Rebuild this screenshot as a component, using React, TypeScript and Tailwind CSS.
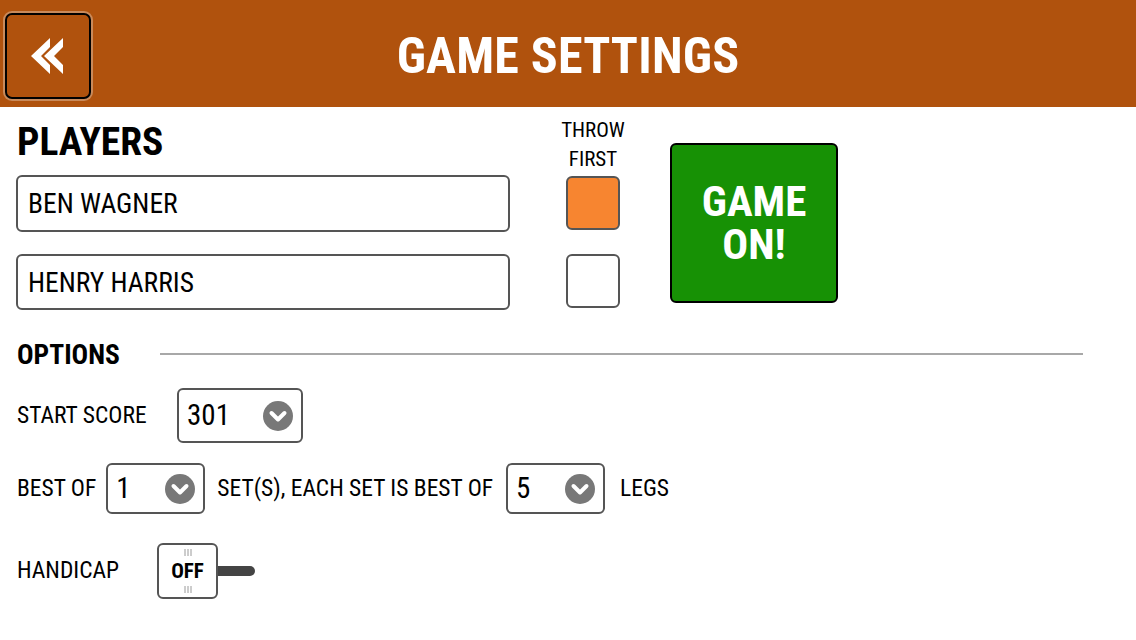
import React from "react";

function Chevron() {
  return (
    <svg width="30" height="30" viewBox="0 0 30 30" className="shrink-0">
      <circle cx="15" cy="15" r="15" fill="#787878" />
      <path d="M8.5 12 L15 18.5 L21.5 12" fill="none" stroke="#ffffff" strokeWidth="4" strokeLinecap="round" strokeLinejoin="round" />
    </svg>
  );
}

function Select({ value, w, h }: { value: string; w: string; h: string }) {
  return (
    <div className={`${w} ${h} border-2 border-[#555555] rounded-[6px] flex items-center justify-between pl-[8px] pr-[8px] bg-white`}>
      <span className="text-[29px] leading-none">{value}</span>
      <Chevron />
    </div>
  );
}

function Marks() {
  return (
    <svg width="8" height="7" viewBox="0 0 8 7">
      <line x1="1" y1="0" x2="1" y2="7" stroke="#9a9a9a" strokeWidth="1" />
      <line x1="4" y1="0" x2="4" y2="7" stroke="#9a9a9a" strokeWidth="1" />
      <line x1="7" y1="0" x2="7" y2="7" stroke="#9a9a9a" strokeWidth="1" />
    </svg>
  );
}

export default function App() {
  return (
    <div className="w-[1136px] h-[640px] bg-white text-black font-['Roboto_Condensed','Roboto',sans-serif] font-stretch-condensed overflow-hidden">
      <header className="h-[107px] bg-[#b0520d] grid grid-cols-[1fr_auto_1fr] items-center">
        <div className="pl-[5px]">
          <button className="w-[86px] h-[86px] mt-[4px] border-2 border-black rounded-[7px] ring-2 ring-[#c98a5a] flex items-center justify-center bg-[#b0520d]">
            <svg width="34" height="40" viewBox="0 0 34 40">
              <polygon points="0,20 19,2 19,11 10,20 19,29 19,38" fill="#ffffff" />
              <polygon points="13,20 32,2 32,11 23,20 32,29 32,38" fill="#ffffff" />
            </svg>
          </button>
        </div>
        <h1 className="text-[50px] leading-none font-bold text-white pt-[4px] tracking-[0.2px]">GAME SETTINGS</h1>
        <div />
      </header>

      <main className="pl-[16px] pt-[9px]">
        <div className="flex items-start">
          <div className="w-[494px]">
            <h2 className="text-[39.5px] leading-none font-bold mt-[6px] pl-[1px]">PLAYERS</h2>
            <div className="mt-[13px] h-[57px] border-2 border-[#555555] rounded-[6px] flex items-center pl-[10px] pt-[2px] text-[27.5px]">BEN WAGNER</div>
            <div className="mt-[22px] h-[56px] border-2 border-[#555555] rounded-[6px] flex items-center pl-[10px] pt-[2px] text-[27.5px]">HENRY HARRIS</div>
          </div>
          <div className="ml-[56px] w-[54px] flex flex-col items-center">
            <div className="text-[21px] leading-[29px] text-center whitespace-nowrap">THROW<br />FIRST</div>
            <div className="mt-[2px] w-[54px] h-[54px] border-2 border-[#555555] rounded-[6px] bg-[#f78530]" />
            <div className="mt-[24px] w-[54px] h-[54px] border-2 border-[#555555] rounded-[6px] bg-white" />
          </div>
          <button className="ml-[50px] mt-[27px] w-[168px] h-[160px] bg-[#179105] border-2 border-black rounded-[6px] text-white font-bold text-[43px] leading-[43px] flex items-center justify-center text-center">
            <span>GAME<br />ON!</span>
          </button>
        </div>

        <div className="mt-[31px] flex items-center pr-[53px]">
          <h3 className="text-[27.5px] leading-none font-bold pl-[1px]">OPTIONS</h3>
          <div className="ml-[40px] flex-1 h-[2px] bg-[#a8a8a8]" />
        </div>

        <div className="mt-[20px] flex items-center">
          <span className="text-[23.5px] pl-[1px] w-[161px]">START SCORE</span>
          <Select value="301" w="w-[126px]" h="h-[55px]" />
        </div>

        <div className="mt-[20px] flex items-center text-[23.5px]">
          <span className="pl-[1px]">BEST OF</span>
          <div className="ml-[10px]"><Select value="1" w="w-[99px]" h="h-[51px]" /></div>
          <span className="ml-[12px]">SET(S), EACH SET IS BEST OF</span>
          <div className="ml-[13px]"><Select value="5" w="w-[99px]" h="h-[51px]" /></div>
          <span className="ml-[15px]">LEGS</span>
        </div>

        <div className="mt-[29px] flex items-center">
          <span className="text-[23.5px] pl-[1px] w-[141px]">HANDICAP</span>
          <div className="flex items-center">
            <div className="w-[61px] h-[56px] border-2 border-[#555555] rounded-[6px] bg-white flex flex-col items-center justify-between py-[4px]">
              <Marks />
              <span className="text-[21px] leading-none font-bold">OFF</span>
              <Marks />
            </div>
            <div className="w-[37px] h-[10px] bg-[#444444] rounded-r-full" />
          </div>
        </div>
      </main>
    </div>
  );
}
